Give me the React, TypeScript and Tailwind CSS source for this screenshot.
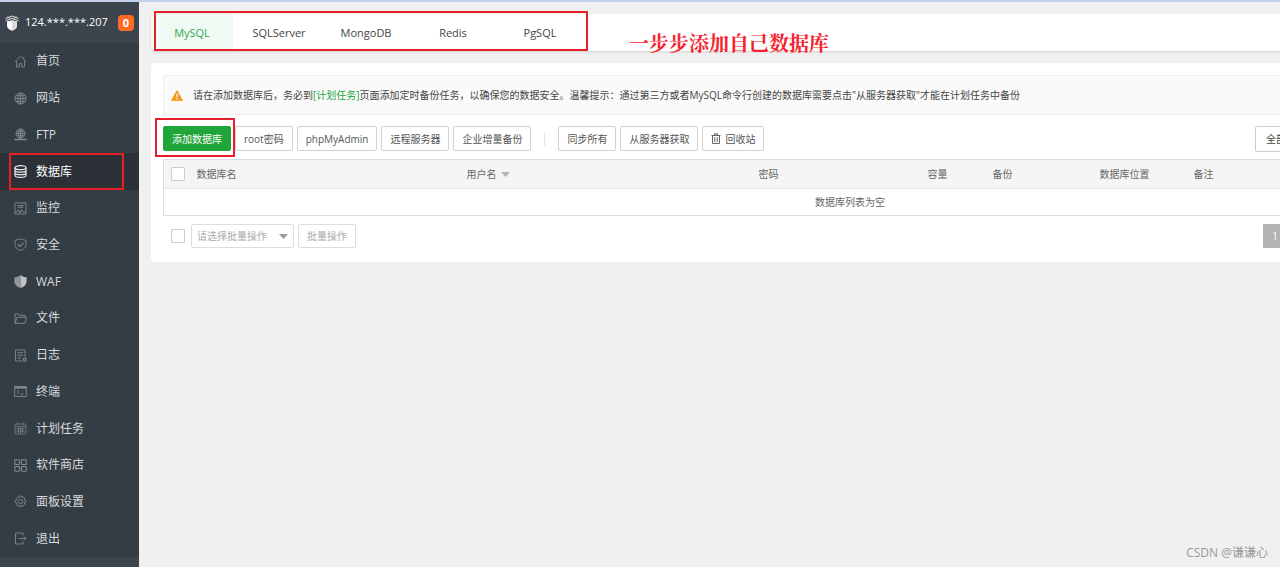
import React from "react";

type IconName =
  | "home" | "globe" | "ftp" | "database" | "monitor" | "security" | "waf"
  | "folder" | "log" | "terminal" | "calendar" | "store" | "settings" | "exit";

const drawings: Record<IconName, React.ReactNode> = {
  home: <path d="M.8 6.800 6.500 1.300l5.700 5.500M2.500 6v6h2.800V8.600h2.400V12h2.800V6M9.800 2v1.800" />,
  globe: (
    <g>
      <circle cx="6.500" cy="6.500" r="5.500" />
      <ellipse cx="6.500" cy="6.500" rx="2.600" ry="5.500" />
      <path d="M6.500 1v11M1 6.500h11M1.800 3.700h9.400M1.800 9.300h9.400" />
    </g>
  ),
  ftp: (
    <g>
      <circle cx="6.500" cy="5.500" r="4.500" />
      <ellipse cx="6.500" cy="5.500" rx="2" ry="4.500" />
      <path d="M2 5.500h9M2.700 3.300h7.600M2.700 7.700h7.600M6.500 1v10.500" />
      <path d="M.3 11.500h12.400" strokeWidth="1.500" />
    </g>
  ),
  database: (
    <g strokeWidth="1.200">
      <ellipse cx="6.500" cy="2.700" rx="5.500" ry="2" />
      <path d="M1 2.700v7.500c0 1.200 2.500 2.100 5.500 2.100s5.500-.9 5.500-2.100V2.700M1 5.200c0 1.200 2.500 2 5.500 2s5.500-.8 5.500-2M1 7.700c0 1.200 2.500 2 5.500 2s5.500-.8 5.500-2" />
    </g>
  ),
  monitor: (
    <g>
      <path d="M1 1h11v11H1zM3.500 3.500h6M3.500 5.200h6" />
      <path d="M1.500 9.800h2l1-1.800 1.300 3 1.700-3.500 1 2.300h3" />
    </g>
  ),
  security: (
    <g>
      <path d="M6.500.8 12 2.500v4.200c0 2.700-2.200 4.700-5.500 5.800C3.200 11.400 1 9.400 1 6.700V2.500z" />
      <path d="m3.800 6.300 2.200 2.200 3.600-3.700" strokeWidth="1.200" />
    </g>
  ),
  waf: (
    <g stroke="none">
      <path d="M6.500 0v13C2.800 11.700.4 9.600.4 6.700V2.300c2.200 0 4.300-.7 6.100-2.300z" fill="#939698" />
      <path d="M6.500 0v13c3.700-1.300 6.100-3.400 6.100-6.300V2.300c-2.200 0-4.300-.7-6.100-2.300z" fill="#c0c2c3" />
    </g>
  ),
  folder: <path d="M1 11.300V2h3.500l1 1.300h5.300v1.900M1 11.300h9.800l1.700-6.100H3.200L1 11.300z" />,
  log: (
    <g>
      <path d="M11 8V1H1.500v11H8M3.500 3.700H9M3.500 6.200H9M3.500 8.800h3.500" />
      <circle cx="10.700" cy="10.700" r="1.500" strokeWidth="1.200" />
    </g>
  ),
  terminal: (
    <g>
      <path d="M.7 1.500h11.600v10H.7z" />
      <path d="M.7 2.600h11.600" strokeWidth="2" />
      <path d="m3 5.500 2 1.700L3 9M6.500 9.200h3" />
    </g>
  ),
  calendar: (
    <g opacity=".8">
      <rect x="1" y="2" width="11" height="10" rx="1" />
      <path d="M1 4.700h11M3.800.6v2.500M9.200.6v2.500M2.500 7h8M2.500 9.300h8M4.500 5.500v5.500M8.500 5.500v5.500M6.500 5.500v5.500" />
    </g>
  ),
  store: (
    <g strokeWidth="1.100">
      <rect x=".8" y=".8" width="4.700" height="4.700" rx=".6" />
      <rect x="7.500" y=".8" width="4.700" height="4.700" rx=".6" />
      <rect x=".8" y="7.500" width="4.700" height="4.700" rx=".6" />
      <rect x="7.500" y="7.500" width="4.700" height="4.700" rx=".6" />
    </g>
  ),
  settings: (
    <g>
      <path d="m5.500 1 2 0 .4 1.400 1.300-.6 1.500 1.500-.6 1.200 1.500.8v2l-1.500.6.6 1.400-1.500 1.500-1.300-.6-.4 1.400h-2l-.5-1.400-1.300.6-1.500-1.500.6-1.400L1.300 7.500v-2l1.500-.8-.6-1.200 1.500-1.500 1.300.6z" />
      <circle cx="6.500" cy="6.500" r="2.200" />
    </g>
  ),
  exit: <path d="M9 3.500V1H1.500v11H9V9.500M5 6.500h7M10 4.500l2 2-2 2" />,
};

function Icon({ name, active }: { name: IconName; active?: boolean }) {
  return (
    <svg
      viewBox="0 0 13 13"
      className={active ? "size-[13px] shrink-0 text-gray-200" : "size-[13px] shrink-0 text-[#85898d]"}
      fill="none"
      stroke="currentColor"
      strokeWidth="0.9"
      aria-hidden="true"
    >
      {drawings[name]}
    </svg>
  );
}

const menu: { icon: IconName; label: string }[] = [
  { icon: "home", label: "首页" },
  { icon: "globe", label: "网站" },
  { icon: "ftp", label: "FTP" },
  { icon: "database", label: "数据库" },
  { icon: "monitor", label: "监控" },
  { icon: "security", label: "安全" },
  { icon: "waf", label: "WAF" },
  { icon: "folder", label: "文件" },
  { icon: "log", label: "日志" },
  { icon: "terminal", label: "终端" },
  { icon: "calendar", label: "计划任务" },
  { icon: "store", label: "软件商店" },
  { icon: "settings", label: "面板设置" },
  { icon: "exit", label: "退出" },
];

const tabs = ["MySQL", "SQLServer", "MongoDB", "Redis", "PgSQL"];

function Sidebar() {
  return (
    <aside className="flex w-[139px] shrink-0 flex-col bg-[#3c444d] pb-2.5">
      <div className="flex h-[41px] items-center pr-[5px] pl-[5px] text-white">
        <svg viewBox="0 0 14 16" className="h-4 w-3.5 shrink-0" aria-hidden="true">
          <path d="M7 5.200 12 6.500v4.200c0 2.300-2 3.900-5 5-3-1.100-5-2.700-5-5V6.500z" fill="#fff" />
          <path d="M7 5.200 12 6.500v4.200c0 2.300-2 3.900-5 5z" fill="#d9dbdd" />
          <path d="M.5 3.500 7 1l6.500 2.500M.5 5.800 7 3.300l6.500 2.500M2.500 1.800 5 3.300M11.500 1.800 9 3.300" fill="none" stroke="#e3e5e7" strokeWidth="1" />
        </svg>
        <span className="ml-[6px] text-[11px]">124.***.***.207</span>
        <span className="ml-auto flex size-4 items-center justify-center rounded bg-[#fd6b25] text-[11px] leading-none font-bold">0</span>
      </div>
      <nav className="flex flex-1 flex-col bg-[#353d44]">
        {menu.map(({ icon, label }) => {
          const active = icon === "database";
          return (
            <a
              key={icon}
              href="#"
              className={
                active
                  ? "relative flex min-h-9 flex-1 items-center gap-[9px] bg-[#2c3138] pl-3.5 text-xs text-white"
                  : "flex min-h-9 flex-1 items-center gap-[9px] pl-3.5 text-xs text-[#d8dadc]"
              }
            >
              <Icon name={icon} active={active} />
              {label}
              {active && <span className="absolute inset-y-0 right-[15px] left-[9px] border-2 border-[#e5202a]" />}
            </a>
          );
        })}
      </nav>
    </aside>
  );
}

function ToolButton({ children }: { children: React.ReactNode }) {
  return (
    <button type="button" className="flex h-[25px] items-center gap-1 rounded-xs border border-[#d2d2d2] bg-white px-2 whitespace-nowrap text-[#555]">
      {children}
    </button>
  );
}

function Tick({ label }: { label: string }) {
  return <input type="checkbox" aria-label={label} className="block size-3.5 shrink-0 appearance-none rounded-[1px] border border-[#ccc] bg-white" />;
}

function Arrow({ className }: { className: string }) {
  return (
    <svg viewBox="0 0 9 5" className={className} aria-hidden="true">
      <path d="M0 0h9L4.500 5z" fill="currentColor" />
    </svg>
  );
}

function DatabaseTable() {
  return (
    <table className="mt-2 w-full table-fixed border-collapse border border-[#ddd] text-left text-[#666]">
      <colgroup>
        <col className="w-[25px]" />
        <col className="w-[270px]" />
        <col className="w-[292px]" />
        <col className="w-[169px]" />
        <col className="w-[65px]" />
        <col className="w-[107px]" />
        <col className="w-[94px]" />
        <col />
      </colgroup>
      <thead>
        <tr className="h-[29px] bg-[#f5f5f5]">
          <th className="pl-[7px]"><Tick label="数据库名" /></th>
          <th className="pl-2 font-normal">数据库名</th>
          <th className="pl-2 font-normal">
            <span className="flex items-center gap-1">用户名 <Arrow className="h-[5px] w-[9px] text-[#b5b5b5]" /></span>
          </th>
          <th className="pl-2 font-normal">密码</th>
          <th className="pl-2 font-normal">容量</th>
          <th className="pl-2 font-normal">备份</th>
          <th className="pl-2 font-normal">数据库位置</th>
          <th className="pl-2 font-normal">备注</th>
        </tr>
      </thead>
      <tbody>
        <tr className="h-[27px] border-t border-[#e5e5e5]">
          <td colSpan={8} className="text-center">数据库列表为空</td>
        </tr>
      </tbody>
    </table>
  );
}

export default function App() {
  return (
    <div className="flex min-h-screen flex-col overflow-hidden border-t-2 border-[#c3d1ea] bg-[#f0f0f0] font-['Open_Sans','Noto_Sans_CJK_SC',sans-serif]">
      <div className="flex flex-1">
        <Sidebar />
        <main className="flex min-w-0 flex-1 flex-col overflow-hidden pt-3 pl-3 text-[10px] leading-[14px]">
          <div className="min-w-[1398px]">
            <div className="relative flex h-[37px] gap-[5px] rounded bg-white text-[11px] shadow-sm">
              {tabs.map((tab) => (
                <button
                  key={tab}
                  type="button"
                  className={tab === "MySQL" ? "w-[82px] bg-[#f0f9f2] text-[#33a853]" : "w-[82px] text-[#444]"}
                >
                  {tab}
                </button>
              ))}
              <span className="pointer-events-none absolute -top-[3px] left-[3px] h-10 w-[434px] border-2 border-[#e5202a]" />
              <p className="absolute top-[18px] left-[478px] font-['Liberation_Serif','Noto_Serif_CJK_SC','Noto_Sans_CJK_SC',serif] text-xl leading-6 font-bold whitespace-nowrap text-[#f5222d]">
                一步步添加自己数据库
              </p>
            </div>

            <section className="mt-3 rounded bg-white px-3 pt-3 pb-3.5">
              <div className="flex h-10 items-center gap-2.5 border border-[#efefef] bg-[#fafafa] pl-[7px] text-[#444]">
                <svg viewBox="0 0 12 11" className="h-[11px] w-3 shrink-0" aria-hidden="true">
                  <path d="M6 .5 11.600 10.500H.4z" fill="#f79a1c" stroke="#f79a1c" strokeWidth=".8" strokeLinejoin="round" />
                  <path d="M6 3.700v3.500M6 8.200v1.200" stroke="#fff" strokeWidth="1.200" />
                </svg>
                <p className="whitespace-nowrap">
                  请在添加数据库后，务必到<a href="#" className="text-[#20a53a]">[计划任务]</a>页面添加定时备份任务，以确保您的数据安全。温馨提示：通过第三方或者MySQL命令行创建的数据库需要点击"从服务器获取"才能在计划任务中备份
                </p>
              </div>

              <div className="mt-[11px] flex h-[25px] items-center gap-1">
                <div className="relative">
                  <button type="button" className="flex h-[25px] items-center rounded-xs border border-[#20a53a] bg-[#20a53a] px-2 text-white">
                    添加数据库
                  </button>
                  <span className="pointer-events-none absolute -top-2 -right-1 -bottom-1.5 -left-2 z-10 border-2 border-[#e5202a]" />
                </div>
                <ToolButton>root密码</ToolButton>
                <ToolButton>phpMyAdmin</ToolButton>
                <ToolButton>远程服务器</ToolButton>
                <ToolButton>企业增量备份</ToolButton>
                <span className="mx-[9px] h-3.5 w-px bg-[#e5e5e5]" />
                <ToolButton>同步所有</ToolButton>
                <ToolButton>从服务器获取</ToolButton>
                <ToolButton>
                  <svg viewBox="0 0 10 11" className="h-[11px] w-2.5" fill="none" stroke="#666" aria-hidden="true">
                    <path d="M.5 2.500h9M3.500 2.300V.8h3v1.500M1.500 2.500v8h7v-8M3.800 4.200v5M6.200 4.200v5" />
                  </svg>
                  回收站
                </ToolButton>
                <select aria-label="全部" className="ml-auto h-[26px] w-[282px] appearance-none rounded-xs border border-[#ccc] bg-white px-2.5 text-[#444]">
                  <option>全部</option>
                </select>
              </div>

              <DatabaseTable />

              <div className="mt-2 flex items-center gap-1 pl-2 text-[#aaa]">
                <Tick label="批量操作" />
                <div className="relative ml-0.5">
                  <select aria-label="请选择批量操作" className="block h-6 w-[103px] appearance-none rounded-xs border border-[#ddd] bg-white px-[5px]">
                    <option>请选择批量操作</option>
                  </select>
                  <Arrow className="pointer-events-none absolute top-[10px] right-[6px] h-[5px] w-[9px] text-[#999]" />
                </div>
                <button type="button" className="h-6 rounded-xs border border-[#ddd] bg-white px-2">批量操作</button>
                <div className="ml-auto flex w-[274px]">
                  <button type="button" className="h-6 w-6 bg-[#b3b3b3] text-white">1</button>
                </div>
              </div>
            </section>
          </div>
          <footer className="mt-auto pr-3 pb-1.5 text-right text-xs leading-4 text-[#999]">CSDN @谦谦心</footer>
        </main>
      </div>
    </div>
  );
}
